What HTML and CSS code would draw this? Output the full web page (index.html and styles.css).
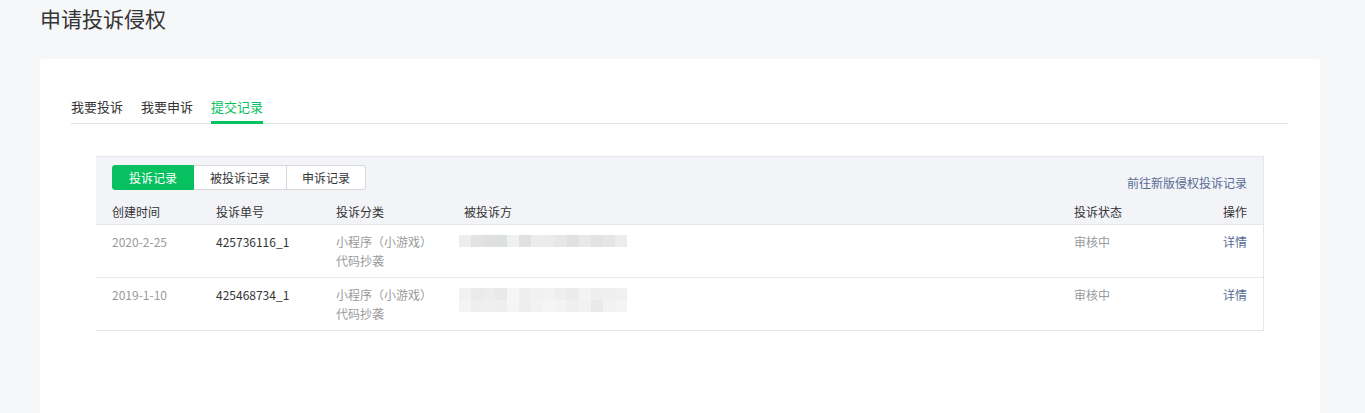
FILE: index.html
```html
<!DOCTYPE html>
<html lang="zh-CN">
<head>
    <meta charset="UTF-8">
    <meta name="viewport" content="width=device-width, initial-scale=1.0">
    <title>申请投诉侵权</title>
    <link rel="stylesheet" href="styles.css">
</head>
<body>
    <h1 class="page-title">申请投诉侵权</h1>

    <div class="card">
        <!-- top tabs -->
        <ul class="tabs">
            <li class="tab">我要投诉</li>
            <li class="tab">我要申诉</li>
            <li class="tab active">提交记录</li>
        </ul>

        <div class="panel">
            <div class="panel-head">
                <div class="toolbar">
                    <div class="seg">
                        <a class="seg-btn on">投诉记录</a>
                        <a class="seg-btn">被投诉记录</a>
                        <a class="seg-btn">申诉记录</a>
                    </div>
                    <a class="link">前往新版侵权投诉记录</a>
                </div>
                <div class="row head">
                    <div>创建时间</div>
                    <div>投诉单号</div>
                    <div>投诉分类</div>
                    <div>被投诉方</div>
                    <div>投诉状态</div>
                    <div class="op">操作</div>
                </div>
            </div>

            <!-- records -->
            <div class="row item">
                <div class="muted">2020-2-25</div>
                <div>425736116_1</div>
                <div class="muted">小程序（小游戏）<br>代码抄袭</div>
                <div><span class="blur one"></span></div>
                <div class="muted">审核中</div>
                <div class="op"><a class="link">详情</a></div>
            </div>
            <div class="row item">
                <div class="muted">2019-1-10</div>
                <div>425468734_1</div>
                <div class="muted">小程序（小游戏）<br>代码抄袭</div>
                <div><span class="blur two"></span></div>
                <div class="muted">审核中</div>
                <div class="op"><a class="link">详情</a></div>
            </div>
        </div>
    </div>
</body>
</html>
```

FILE: styles.css
```css
body {
    margin: 0;
    background: #f6f7f9;
    font-family: "Noto Sans CJK SC", "Liberation Sans", sans-serif;
    color: #353535;
}
.page-title {
    margin: 0;
    padding: 4px 0 0 40px;
    height: 55px;
    font-size: 21px;
    font-weight: 400;
    line-height: 28px;
}
.card {
    margin: 0 45px 0 40px;
    min-height: 360px;
    padding: 31px 32px 0 31px;
    background: #fff;
    border-radius: 3px 3px 0 0;
}
.tabs {
    list-style: none;
    margin: 0;
    padding: 0;
    display: flex;
    gap: 18px;
    border-bottom: 1px solid #e2e2e2;
}
.tab {
    font-size: 13px;
    line-height: 20px;
    padding: 7px 0 4px;
    border-bottom: 3px solid transparent;
    margin-bottom: -1px;
}
.tab.active {
    color: #07c160;
    border-bottom-color: #07c160;
}
.panel {
    margin: 32px 24px 0 25px;
    border-top: 1px solid #e4e6ea;
    border-right: 1px solid #e4e6ea;
    border-bottom: 1px solid #e4e6ea;
}
.panel-head {
    background: #f3f4f8;
}
.toolbar {
    display: flex;
    align-items: flex-end;
    justify-content: space-between;
    padding: 8px 16px 0;
}
.seg {
    display: flex;
}
.seg-btn {
    font-size: 12px;
    line-height: 23px;
    padding: 0 16px;
    border: 1px solid #d6d8dc;
    border-left: none;
    background: #fff;
    color: #353535;
}
.seg-btn:first-child {
    border-radius: 3px 0 0 3px;
    border: 1px solid #07c160;
    background: #07c160;
    color: #fff;
}
.seg-btn:last-child {
    border-radius: 0 3px 3px 0;
    padding: 0 15px;
}
.link {
    color: #576b95;
    font-size: 12px;
    line-height: 16px;
}
.toolbar .link {
    margin-bottom: -1px;
}
.row {
    display: grid;
    grid-template-columns: 104px 120px 128px 1fr 120px 53px;
    padding: 0 16px;
    font-size: 12px;
    line-height: 19px;
}
.row.head {
    padding-top: 12px;
    padding-bottom: 3px;
    border-bottom: 1px solid #e4e6ea;
}
.row.item {
    padding-top: 7px;
    padding-bottom: 7px;
    border-bottom: 1px solid #e8e8e8;
}
.row.item:last-child {
    border-bottom: none;
}
.op {
    text-align: right;
}
.muted {
    color: #9a9a9a;
}
.blur {
    display: block;
    width: 168px;
    margin: 3px 0 0 -5px;
}
.blur.one {
    height: 12px;
    background: linear-gradient(90deg, #ededed 0 12px, #e4e1e1 12px 24px, #e0e0e0 24px 36px, #dde0e0 36px 48px, #f0f0f0 48px 60px, #e1e1e1 60px 72px, #ececec 72px 84px, #ebebeb 84px 96px, #e7e7e7 96px 108px, #e0e2e2 108px 120px, #ebe9e8 120px 132px, #e2e2e2 132px 144px, #e6e6e6 144px 156px, #ececec 156px 168px);
}
.blur.two {
    height: 24px;
    background:
        linear-gradient(90deg, #f1f1f1 0 12px, #ebe9e9 12px 24px, #ececec 24px 36px, #e8e9ea 36px 48px, #f6f6f6 48px 60px, #eeeeee 60px 72px, #f1f1f1 72px 84px, #f2f2f2 84px 96px, #eeeeee 96px 108px, #eaeceb 108px 120px, #f3f3f3 120px 132px, #eeeeee 132px 144px, #efefef 144px 156px, #f0f0f0 156px 168px) top / 100% 12px no-repeat,
        linear-gradient(90deg, #f4f4f4 0 12px, #efeeee 12px 24px, #efefef 24px 36px, #edeeef 36px 48px, #f5f5f5 48px 60px, #eeeeee 60px 72px, #f2f2f0 72px 84px, #f4f5f6 84px 96px, #f3f3f3 96px 108px, #efefef 108px 120px, #f2f2f2 120px 132px, #e9e9e9 132px 144px, #f2f2f2 144px 156px, #f4f4f2 156px 168px) bottom / 100% 12px no-repeat;
}
```
